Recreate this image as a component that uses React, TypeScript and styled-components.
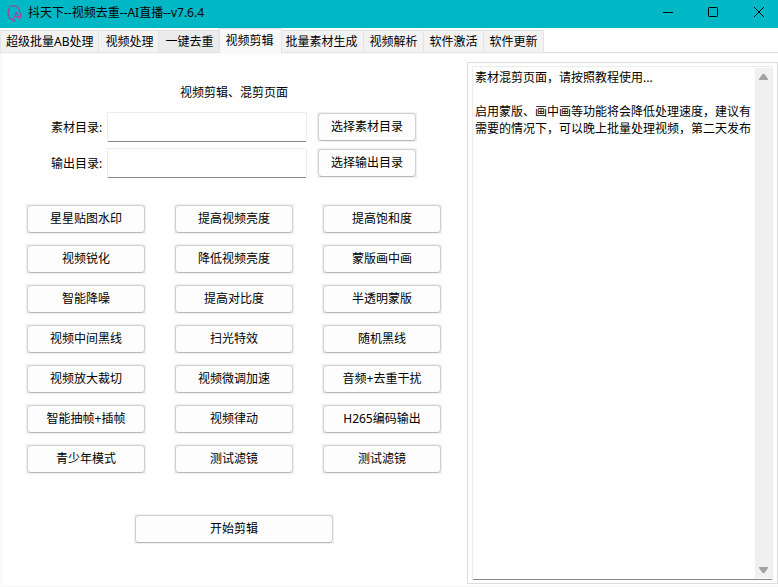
import React, { useState } from "react";
import styled, { createGlobalStyle } from "styled-components";

const GlobalStyle = createGlobalStyle`
  *, *::before, *::after { box-sizing: border-box; }
  body {
    margin: 0;
    background: #f9f9f9;
    color: #000;
    font: 12px/17px "Noto Sans", "Noto Sans CJK SC", sans-serif;
  }
  button, input, textarea { font: inherit; color: inherit; margin: 0; }
`;

const Window = styled.div`
  display: flex;
  flex-direction: column;
  min-height: 100vh;
`;

const TitleBar = styled.header`
  display: flex;
  align-items: center;
  height: 28px;
  padding-left: 7px;
  background: #00b7c6;
`;

const Title = styled.h1`
  flex: 1;
  margin: 0 0 3px 6px;
  font-size: 12px;
  font-weight: 400;
  line-height: 17px;
  white-space: nowrap;
`;

const WindowControls = styled.div`
  display: flex;
  gap: 8px;
  align-self: stretch;
`;

const WindowButton = styled.button`
  display: flex;
  justify-content: center;
  align-items: flex-start;
  width: 38px;
  padding: 7px 0 0;
  border: 0;
  background: transparent;
`;

const TabBar = styled.nav`
  display: flex;
  align-items: flex-end;
  height: 25px;
  background: #fff;
  border-bottom: 1px solid #e3e3e3;
`;

const Tab = styled.button<{ $active: boolean; $hot?: boolean }>`
  flex: none;
  z-index: ${(p) => (p.$active ? 1 : 0)};
  height: ${(p) => (p.$active ? 25 : 22)}px;
  margin: ${(p) => (p.$active ? "0 -2px -1px -1px" : "0")};
  padding: ${(p) => (p.$active ? "0 7px 2px 6px" : "0 5px 0 6px")};
  border: 1px solid #e3e3e3;
  border-width: ${(p) => (p.$active ? "1px 1px 0 1px" : "1px 1px 0 0")};
  background: ${(p) => (p.$active ? "#f9f9f9" : p.$hot ? "#ebebeb" : "#f2f2f2")};
  white-space: nowrap;

  &:first-child {
    border-left-width: 1px;
    padding-left: 5px;
  }
`;

const Page = styled.main`
  flex: 1;
  display: grid;
  grid-template-columns: 464fr 312fr;
  margin: 1px 0 2px 2px;
  background: #fff;
`;

const Workspace = styled.section`
  display: flex;
  flex-direction: column;
  align-items: center;
  padding-top: 30px;
`;

const Heading = styled.h2`
  margin: 0 0 11px;
  font-size: 12px;
  font-weight: 400;
  line-height: 17px;
`;

const Fields = styled.form`
  display: grid;
  gap: 6px;
  margin-bottom: 26px;
`;

const Field = styled.div`
  display: flex;
  align-items: center;
`;

const FieldLabel = styled.label`
  width: 56px;
  white-space: nowrap;
`;

const PathInput = styled.input`
  width: 200px;
  height: 30px;
  margin-right: 10px;
  padding: 0 4px;
  border: 1px solid #ececec;
  border-bottom-color: #868686;
  border-radius: 2px;
  background: #fff;
`;

const PushButton = styled.button<{ $width: number }>`
  width: ${(p) => p.$width}px;
  height: 30px;
  padding: 0;
  border: 1px solid #f0f0f0;
  background: #f0f0f0;
  line-height: 17px;
  white-space: nowrap;
`;

const PushFace = styled.span`
  display: flex;
  align-items: center;
  justify-content: center;
  height: 28px;
  padding-bottom: 1px;
  border: 1px solid #d0d0d0;
  border-bottom-color: #b8b8b8;
  border-radius: 4px;
  background: #fdfdfd;
`;

const Effects = styled.div`
  display: grid;
  grid-template-columns: repeat(3, 120px);
  gap: 10px 28px;
  margin-bottom: 40px;
`;

const LogPanel = styled.aside`
  display: flex;
  margin: 8px 0 1px 1px;
  padding: 3px 4px;
  border: 1px solid #dcdcdc;
`;

const LogBox = styled.div`
  flex: 1;
  display: flex;
  border: 1px solid #ececec;
  border-bottom-color: #868686;
  border-radius: 2px;
`;

const LogText = styled.textarea`
  flex: 1;
  min-width: 0;
  padding: 2px 2px 0;
  border: 0;
  outline: 0;
  resize: none;
  overflow: hidden;
  background: #fff;
`;

const ScrollTrack = styled.div`
  display: flex;
  flex-direction: column;
  justify-content: space-between;
  width: 17px;
  margin: 1px 0;
  background: #f0f0f0;
`;

const ScrollButton = styled.button`
  display: flex;
  align-items: center;
  justify-content: center;
  height: 17px;
  padding: 0;
  border: 0;
  background: transparent;
`;

const tabs = [
  "超级批量AB处理",
  "视频处理",
  "一键去重",
  "视频剪辑",
  "批量素材生成",
  "视频解析",
  "软件激活",
  "软件更新",
];

const effects = [
  "星星贴图水印", "提高视频亮度", "提高饱和度",
  "视频锐化", "降低视频亮度", "蒙版画中画",
  "智能降噪", "提高对比度", "半透明蒙版",
  "视频中间黑线", "扫光特效", "随机黑线",
  "视频放大裁切", "视频微调加速", "音频+去重干扰",
  "智能抽帧+插帧", "视频律动", "H265编码输出",
  "青少年模式", "测试滤镜", "测试滤镜",
];

const folders = [
  { id: "source", label: "素材目录:", action: "选择素材目录" },
  { id: "output", label: "输出目录:", action: "选择输出目录" },
];

const message =
  "素材混剪页面，请按照教程使用...\n\n启用蒙版、画中画等功能将会降低处理速度，建议有需要的情况下，可以晚上批量处理视频，第二天发布";

function Logo() {
  return (
    <svg width="15" height="18" viewBox="0 0 15 18" fill="none" stroke="#a83f96" aria-hidden="true">
      <path d="M3 1.8C4.6.4 9.4.2 11 2.5l1.3 2.2v2.8" strokeWidth="1.1" />
      <path d="M3.2 2.6C1.4 4 1 6 1.5 8L.8 10.2l1.4.6v2.4l1.6.8h1.7v1.6h3" strokeWidth="1.1" />
      <path d="M7 13.5 9 7.5h.8l2 6M8 11.5h3M13.5 7.5v6" strokeWidth="1.2" />
    </svg>
  );
}

function Button({ width, children, ...rest }: { width: number } & React.ButtonHTMLAttributes<HTMLButtonElement>) {
  return (
    <PushButton type="button" $width={width} {...rest}>
      <PushFace>{children}</PushFace>
    </PushButton>
  );
}

export default function App() {
  const [active, setActive] = useState(3);

  return (
    <>
      <GlobalStyle />
      <Window>
        <TitleBar>
          <Logo />
          <Title>抖天下--视频去重--AI直播--v7.6.4</Title>
          <WindowControls>
            <WindowButton type="button" aria-label="最小化">
              <svg width="12" height="11" stroke="#000" fill="none"><path d="M2 5.5h10" /></svg>
            </WindowButton>
            <WindowButton type="button" aria-label="最大化">
              <svg width="10" height="10" stroke="#000" fill="none"><rect x=".5" y=".5" width="9" height="9" rx="1" /></svg>
            </WindowButton>
            <WindowButton type="button" aria-label="关闭">
              <svg width="10" height="10" stroke="#000" fill="none"><path d="M0 0l10 10M10 0L0 10" /></svg>
            </WindowButton>
          </WindowControls>
        </TitleBar>

        <TabBar role="tablist">
          {tabs.map((name, i) => (
            <Tab
              key={name}
              type="button"
              role="tab"
              aria-selected={i === active}
              $active={i === active}
              $hot={i === 2}
              onClick={() => setActive(i)}
            >
              {name}
            </Tab>
          ))}
        </TabBar>

        <Page>
          <Workspace>
            <Heading>视频剪辑、混剪页面</Heading>
            <Fields>
              {folders.map((f) => (
                <Field key={f.id}>
                  <FieldLabel htmlFor={f.id}>{f.label}</FieldLabel>
                  <PathInput id={f.id} type="text" />
                  <Button width={100}>{f.action}</Button>
                </Field>
              ))}
            </Fields>
            <Effects>
              {effects.map((name, i) => (
                <Button key={i} width={120}>{name}</Button>
              ))}
            </Effects>
            <Button width={200}>开始剪辑</Button>
          </Workspace>

          <LogPanel>
            <LogBox>
              <LogText aria-label="日志" readOnly value={message} />
              <ScrollTrack>
                <ScrollButton type="button" aria-label="向上滚动">
                  <svg width="9" height="6" fill="#a3a3a3"><path d="M3.5 0h2L9 5v1H0V5z" /></svg>
                </ScrollButton>
                <ScrollButton type="button" aria-label="向下滚动">
                  <svg width="9" height="6" fill="#a3a3a3"><path d="M3.5 6h2L9 1V0H0v1z" /></svg>
                </ScrollButton>
              </ScrollTrack>
            </LogBox>
          </LogPanel>
        </Page>
      </Window>
    </>
  );
}
